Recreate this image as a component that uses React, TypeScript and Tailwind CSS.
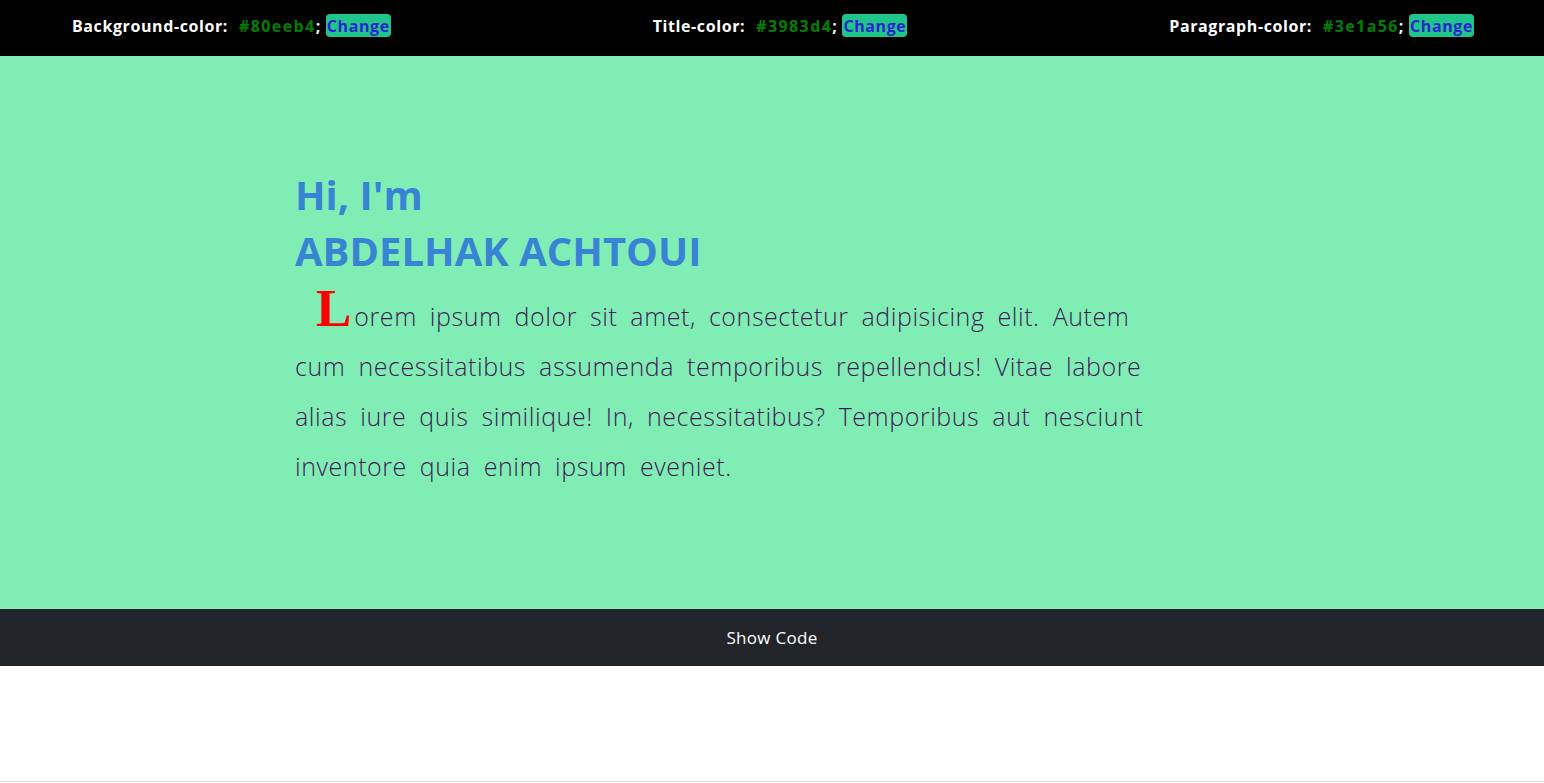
import React from "react";

const ColorItem: React.FC<{ label: string; value: string }> = ({ label, value }) => (
  <div className="flex items-center text-[16px] font-bold tracking-[0.6px]">
    <span className="text-white">{label}</span>
    <span className="ml-[11px] tracking-[1.4px] text-[#008000]">{value}</span>
    <span className="text-white">;</span>
    <button className="ml-[5px] h-[23px] rounded-[4px] bg-[#20c58a] px-[1px] text-[16px] font-bold leading-none tracking-[0.6px] text-[#2c22d2]">
      Change
    </button>
  </div>
);

export default function App() {
  return (
    <div className="w-full bg-white font-['Open_Sans',sans-serif]">
      <header className="flex h-14 items-center justify-between bg-black pb-[5px] pl-[72px] pr-[70px]">
        <ColorItem label="Background-color:" value="#80eeb4" />
        <ColorItem label="Title-color:" value="#3983d4" />
        <ColorItem label="Paragraph-color:" value="#3e1a56" />
      </header>

      <section className="h-[553px] bg-[#80eeb4] pl-[295px] pt-[111px]">
        <h1 className="text-[40px] font-bold leading-[56px] text-[#3983d4]">
          Hi, I'm
          <br />
          ABDELHAK ACHTOUI
        </h1>
        <p className="mt-[4px] whitespace-nowrap text-[25px] font-light leading-[50px] tracking-[0.55px] text-[#3e1a56] [word-spacing:6px]">
          <span className="pl-[21px] pr-[3px] font-['Liberation_Serif',serif] text-[53px] font-bold tracking-normal text-[#ff0000]">L</span>
          orem ipsum dolor sit amet, consectetur adipisicing elit. Autem
          <br />
          cum necessitatibus assumenda temporibus repellendus! Vitae labore
          <br />
          alias iure quis similique! In, necessitatibus? Temporibus aut nesciunt
          <br />
          inventore quia enim ipsum eveniet.
        </p>
      </section>

      <div className="flex h-[57px] items-center justify-center bg-[#212529] text-[17px] tracking-[0.3px] text-white">
        Show Code
      </div>
      <div className="h-[116px] border-b border-[#dcdcdc]" />
    </div>
  );
}
